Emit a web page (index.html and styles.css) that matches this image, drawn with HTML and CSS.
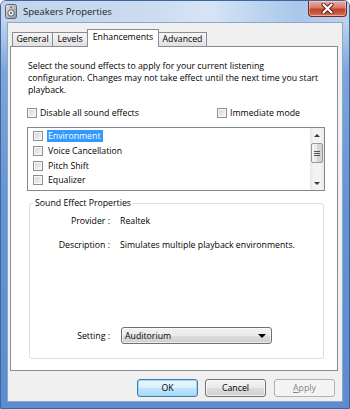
FILE: index.html
```html
<!DOCTYPE html>
<html>
<head>
<meta charset="utf-8">
<link rel="stylesheet" href="styles.css">
</head>
<body>
<div class="window">
  <div class="titlebar">
    <svg class="app-icon" width="12" height="15" viewBox="0 0 12 15">
      <defs>
        <linearGradient id="spk" x1="0" y1="0" x2="1" y2="1">
          <stop offset="0" stop-color="#e4e6e9"/>
          <stop offset="1" stop-color="#8d939b"/>
        </linearGradient>
      </defs>
      <rect x="0.5" y="0.5" width="11" height="14" rx="2" fill="url(#spk)" stroke="#5f656d"/>
      <circle cx="6" cy="9" r="3.2" fill="#f4f5f6" stroke="#5a6068"/>
      <circle cx="6" cy="9" r="1.2" fill="#6b7179"/>
      <circle cx="6" cy="3.3" r="1" fill="#6b7179"/>
    </svg>
    <span class="title">Speakers Properties</span>
    <div class="close">
      <svg width="13" height="11" viewBox="0 0 13 11">
        <path d="M2.5 1.5 L10.5 9.5 M10.5 1.5 L2.5 9.5" stroke="#5b1b12" stroke-width="4" stroke-linecap="round"/>
        <path d="M2.5 1.5 L10.5 9.5 M10.5 1.5 L2.5 9.5" stroke="#ffffff" stroke-width="2.2" stroke-linecap="round"/>
      </svg>
    </div>
  </div>
  <div class="frame">
    <div class="client">
      <div class="tabs">
        <div class="tab t-general">General</div>
        <div class="tab t-levels">Levels</div>
        <div class="tab t-enh active">Enhancements</div>
        <div class="tab t-adv">Advanced</div>
      </div>
      <div class="panel">
        <p class="intro">Select the sound effects to apply for your current listening<br>configuration. Changes may not take effect until the next time you start<br>playback.</p>
        <div class="opts">
          <div class="cb"><span class="box"></span><span>Disable all sound effects</span></div>
          <div class="cb"><span class="box"></span><span>Immediate mode</span></div>
        </div>
        <div class="list">
          <div class="items">
            <div class="item"><span class="box"></span><span class="sel">Environment</span></div>
            <div class="item"><span class="box"></span><span class="txt">Voice Cancellation</span></div>
            <div class="item"><span class="box"></span><span class="txt">Pitch Shift</span></div>
            <div class="item"><span class="box"></span><span class="txt">Equalizer</span></div>
            <div class="item"><span class="box"></span></div>
          </div>
          <div class="scrollbar">
            <div class="arrow"><span class="tri-up"></span></div>
            <div class="thumb">
              <svg width="6" height="5" viewBox="0 0 6 5"><path d="M0 0.5H6M0 2.5H6M0 4.5H6" stroke="#555" stroke-width="1"/></svg>
            </div>
            <div class="track"></div>
            <div class="arrow"><span class="tri-down"></span></div>
          </div>
        </div>
        <fieldset class="group">
          <legend>Sound Effect Properties</legend>
          <div class="prop first"><span class="lbl">Provider :</span><span>Realtek</span></div>
          <div class="prop"><span class="lbl">Description :</span><span>Simulates multiple playback environments.</span></div>
          <div class="prop setting"><span class="lbl">Setting :</span>
            <div class="combo"><span>Auditorium</span><span class="tri-down dark"></span></div>
          </div>
        </fieldset>
      </div>
      <div class="buttons">
        <button class="btn default">OK</button>
        <button class="btn">Cancel</button>
        <button class="btn disabled"><u>A</u>pply</button>
      </div>
    </div>
  </div>
</div>
</body>
</html>
```
FILE: styles.css
```css
* { box-sizing: border-box; }
html, body { margin: 0; padding: 0; }
body {
  width: 350px;
  height: 409px;
  overflow: hidden;
  font-family: "Open Sans", "Segoe UI", sans-serif;
  font-size: 8.75px;
  color: #000;
  background: #fff;
}
.window {
  width: 350px;
  height: 409px;
  display: flex;
  flex-direction: column;
  border: 1px solid #3d669e;
  border-radius: 6px 6px 0 0;
  background: linear-gradient(180deg, #c4d7ee 0px, #bfd3ec 21px, #7ea5da 70px, #6594d3 200px, #5c8bcf 100%);
  overflow: hidden;
}
.titlebar {
  height: 21px;
  display: flex;
  align-items: flex-start;
  background: linear-gradient(90deg, #c2d5ec 0%, #cadbf0 40%, #d6e4f5 60%, #a9c7eb 85%, #bcd3ee 100%);
  flex-shrink: 0;
}
.app-icon { margin: 3px 0 0 4px; }
.title {
  margin-left: 6px;
  padding-top: 4px;
  line-height: 14px;
  font-size: 9.5px;
  color: #1b1b1b;
}
.close {
  margin-left: auto;
  margin-right: 2px;
  width: 39px;
  height: 16px;
  border: 1px solid #6e2b22;
  border-top: none;
  border-radius: 0 0 4px 4px;
  background: linear-gradient(180deg, #eab0a2 0%, #d9786a 45%, #c3402f 55%, #cf5a41 85%, #e08a6c 100%);
  display: flex;
  align-items: center;
  justify-content: center;
  box-shadow: inset 0 0 0 1px rgba(255,255,255,0.35);
}
.frame {
  flex: 1;
  display: flex;
  padding: 0 6px 6px 6px;
}
.client {
  flex: 1;
  display: flex;
  flex-direction: column;
  background: #f0f0f0;
  border: 1px solid #8ea7c9;
  padding: 6px 4px 4px 2px;
}
.tabs {
  display: flex;
  align-items: flex-end;
  height: 18px;
  margin-left: 2px;
  margin-bottom: -1px;
  position: relative;
  z-index: 1;
}
.tab {
  height: 14px;
  margin-bottom: 1px;
  margin-left: -1px;
  border: 1px solid #898c95;
  border-bottom: none;
  background: linear-gradient(180deg, #f6f6f6 0%, #ececec 50%, #e1e1e1 100%);
  text-align: center;
  line-height: 13px;
  white-space: nowrap;
}
.tab:first-child { margin-left: 0; }
.t-general { width: 41px; }
.t-levels { width: 36px; }
.t-enh { width: 72px; }
.t-adv { width: 49px; }
.tab.active {
  height: 18px;
  margin-bottom: 0;
  background: #fff;
  line-height: 15px;
  position: relative;
  z-index: 2;
}
.panel {
  flex: 1;
  display: flex;
  flex-direction: column;
  border: 1px solid #898c95;
  background: #fff;
  padding: 13px 12px 11px 16px;
}
.intro {
  margin: 0;
  padding-left: 1px;
  line-height: 12px;
  white-space: nowrap;
}
.opts {
  margin-top: 11px;
  display: grid;
  grid-template-columns: 190px auto;
  height: 12px;
  line-height: 12px;
}
.cb {
  display: flex;
  align-items: center;
  gap: 3px;
}
.box {
  width: 10px;
  height: 10px;
  flex-shrink: 0;
  border: 1px solid #8e8f8f;
  background: linear-gradient(135deg, #d4d4d4 0%, #e9e9e9 60%, #fafafa 100%);
  box-shadow: inset 0 0 0 1px #f7f7f7;
}
.list {
  margin-top: 8px;
  height: 64px;
  border: 1px solid #828790;
  display: flex;
}
.items {
  flex: 1;
  overflow: hidden;
  padding: 1px 0 0 5px;
}
.item {
  height: 14.67px;
  display: flex;
  align-items: center;
  gap: 4px;
  line-height: 12px;
  white-space: nowrap;
}
.item .txt { padding-left: 1px; }
.sel {
  background: #3399ff;
  color: #fff;
  padding: 0 2px 0 1px;
  line-height: 12px;
}
.scrollbar {
  width: 14px;
  display: flex;
  flex-direction: column;
  background: linear-gradient(90deg, #e6e6e6 0%, #f3f3f3 25%, #f3f3f3 75%, #e9e9e9 100%);
}
.arrow {
  height: 14px;
  display: flex;
  align-items: center;
  justify-content: center;
  flex-shrink: 0;
}
.track { flex: 1; }
.tri-up {
  width: 0;
  height: 0;
  border-left: 3px solid transparent;
  border-right: 3px solid transparent;
  border-bottom: 3px solid #3a3a3a;
}
.tri-down {
  width: 0;
  height: 0;
  border-left: 3px solid transparent;
  border-right: 3px solid transparent;
  border-top: 3px solid #3a3a3a;
}
.thumb {
  margin: 1px 1px 0 1px;
  height: 20px;
  flex-shrink: 0;
  border: 1px solid #989898;
  border-radius: 2px;
  background: linear-gradient(90deg, #f5f5f5 0%, #e8e8e8 50%, #d9d9d9 51%, #d2d2d2 100%);
  display: flex;
  align-items: center;
  justify-content: center;
}
.group {
  margin: 6px 1px 0 2px;
  border: 1px solid #d5dfe5;
  border-radius: 3px;
  padding: 0 0 14px 0;
  min-width: 0;
}
.group legend {
  margin-left: 3px;
  padding: 0 2px;
  line-height: 12px;
}
.prop {
  display: grid;
  grid-template-columns: 80px 1fr;
  column-gap: 10px;
  line-height: 12px;
  margin-top: 12px;
  white-space: nowrap;
}
.prop.first { margin-top: 6px; }
.prop .lbl { text-align: right; }
.prop.setting {
  margin-top: 76px;
  align-items: center;
  height: 17px;
}
.combo {
  width: 151px;
  height: 17px;
  border: 1px solid #707070;
  border-radius: 3px;
  background: linear-gradient(180deg, #f2f2f2 0%, #ebebeb 50%, #dddddd 51%, #cfcfcf 100%);
  box-shadow: inset 0 0 0 1px rgba(255,255,255,0.6);
  display: flex;
  align-items: center;
  justify-content: space-between;
  padding: 0 5px 0 3px;
  margin-left: 1px;
}
.tri-down.dark {
  border-left-width: 4px;
  border-right-width: 4px;
  border-top: 4px solid #000;
}
.buttons {
  display: flex;
  justify-content: flex-end;
  gap: 7px;
  margin-top: 8px;
  padding-right: 3px;
}
.btn {
  width: 61px;
  height: 18px;
  padding: 0;
  font-family: inherit;
  font-size: 8.75px;
  color: #000;
  line-height: 16px;
  border: 1px solid #707070;
  border-radius: 3px;
  background: linear-gradient(180deg, #f2f2f2 0%, #ebebeb 50%, #dddddd 51%, #cfcfcf 100%);
  box-shadow: inset 0 0 0 1px rgba(255,255,255,0.7);
}
.btn.default {
  border-color: #3c7fb1;
  background: linear-gradient(180deg, #eaf6fd 0%, #d9f0fc 50%, #bee6fd 51%, #a7d9f5 100%);
  box-shadow: inset 0 0 0 1px #9fd7f5;
}
.btn.disabled {
  margin-left: 1px;
  border-color: #adb2b5;
  background: #f4f4f4;
  color: #838383;
  box-shadow: none;
}
.btn u { text-decoration: underline; }
```
